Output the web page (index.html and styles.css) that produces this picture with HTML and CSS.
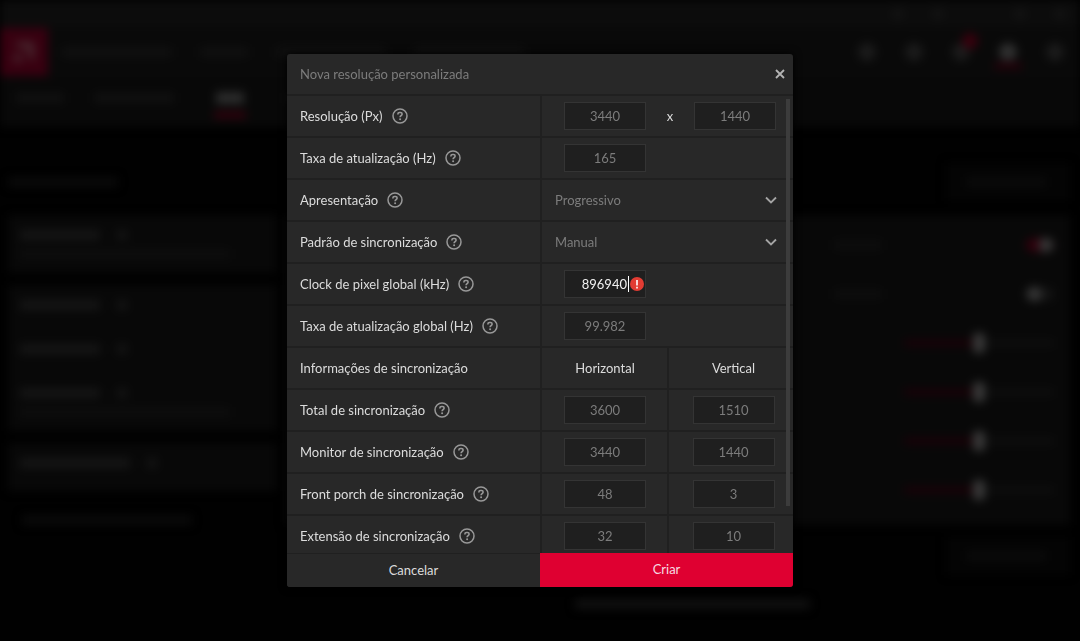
FILE: index.html
```html
<!DOCTYPE html>
<html lang="pt-BR">
<head>
  <meta charset="UTF-8" />
  <meta name="viewport" content="width=device-width, initial-scale=1.0" />
  <title>Nova resolução personalizada</title>
  <link rel="stylesheet" href="styles.css">
</head>
<body>
  <!-- Icons shared by the form rows -->
  <svg class="sprite" aria-hidden="true">
    <symbol id="help" viewBox="0 0 16 16">
      <circle cx="8" cy="8" r="7" fill="none" stroke="currentColor" stroke-width="1.5"/>
      <path d="M5.9 6.6V6c0-.9.7-1.5 1.6-1.5h1c1 0 1.6.6 1.6 1.5 0 1.6-2 1.6-2 3.3" fill="none" stroke="currentColor" stroke-width="1.6"/>
      <circle cx="8.1" cy="11.3" r="1" fill="currentColor"/>
    </symbol>
    <symbol id="chevron" viewBox="0 0 12 8">
      <path d="M1 1.5l5 5 5-5" fill="none" stroke="currentColor" stroke-width="1.8"/>
    </symbol>
  </svg>

  <!-- Dimmed application behind the dialog -->
  <div class="app" aria-hidden="true" inert>
    <div class="titlebar">
      <i class="dot"></i><i class="dot"></i><i class="dot far"></i><i class="dot"></i>
    </div>
    <div class="nav">
      <div class="logo">
        <svg viewBox="0 0 24 24"><path d="M2 2h20v20l-6-6V8H8zM7 11v6h6l-5 5H2v-6z"/></svg>
      </div>
      <i class="bar l"></i><i class="bar s"></i><i class="bar l"></i><i class="bar l"></i>
      <div class="nav-icons">
        <i class="ico"></i><i class="ico"></i><i class="ico badge"></i><i class="ico active"></i><i class="ico"></i>
      </div>
    </div>
    <div class="subnav">
      <i class="bar s"></i><i class="bar m"></i><i class="bar tab"></i><i class="bar m"></i>
    </div>
    <div class="heading"><i class="bar l"></i><div class="drop"><i class="bar m"></i></div></div>
    <div class="columns">
      <div class="left">
        <div class="card">
          <div class="line"><i class="bar m lit"></i><i class="dot"></i></div>
          <i class="bar xl"></i>
        </div>
        <div class="card tall">
          <div class="line"><i class="bar m lit"></i><i class="dot"></i></div>
          <div class="line"><i class="bar m lit"></i><i class="dot"></i></div>
          <div class="line"><i class="bar m lit"></i><i class="dot"></i></div>
          <i class="bar xl"></i>
        </div>
        <div class="card">
          <div class="line"><i class="bar l lit"></i><i class="dot"></i></div>
        </div>
        <i class="bar footnote"></i>
      </div>
      <div class="card right">
        <div class="control"><i class="bar s"></i><input type="checkbox" class="switch" checked></div>
        <div class="control"><i class="bar s"></i><input type="checkbox" class="switch"></div>
        <div class="control"><input type="range" class="slider"></div>
        <div class="control"><input type="range" class="slider"></div>
        <div class="control"><input type="range" class="slider"></div>
        <div class="control"><input type="range" class="slider"></div>
      </div>
    </div>
    <div class="heading end"><div class="drop"><i class="bar m"></i></div></div>
    <div class="status"><i class="bar"></i></div>
  </div>

  <div class="overlay">
    <form class="modal" role="dialog" aria-labelledby="dialog-title">
      <header class="modal-header">
        <h1 id="dialog-title">Nova resolução personalizada</h1>
        <button type="button" class="close" aria-label="Fechar">
          <svg viewBox="0 0 10 10"><path d="M1 1l8 8M9 1l-8 8" stroke="currentColor" stroke-width="1.8"/></svg>
        </button>
      </header>

      <div class="modal-body">
        <div class="rows">
          <div class="row">
            <div class="label"><label for="res-x">Resolução (Px)</label><svg class="help"><use href="#help"/></svg></div>
            <div class="value">
              <input type="text" class="field" id="res-x" value="3440" disabled>
              <span class="times">x</span>
              <input type="text" class="field" aria-label="Resolução vertical" value="1440" disabled>
            </div>
          </div>
          <div class="row">
            <div class="label"><label for="refresh">Taxa de atualização (Hz)</label><svg class="help"><use href="#help"/></svg></div>
            <div class="value"><input type="text" class="field" id="refresh" value="165" disabled></div>
          </div>
          <div class="row">
            <div class="label"><label for="display">Apresentação</label><svg class="help"><use href="#help"/></svg></div>
            <div class="value dropdown">
              <select id="display"><option>Progressivo</option></select>
              <svg class="chevron"><use href="#chevron"/></svg>
            </div>
          </div>
          <div class="row">
            <div class="label"><label for="standard">Padrão de sincronização</label><svg class="help"><use href="#help"/></svg></div>
            <div class="value dropdown">
              <select id="standard"><option>Manual</option></select>
              <svg class="chevron"><use href="#chevron"/></svg>
            </div>
          </div>
          <div class="row">
            <div class="label"><label for="clock">Clock de pixel global (kHz)</label><svg class="help"><use href="#help"/></svg></div>
            <div class="value">
              <div class="invalid">
                <input type="text" class="field" id="clock" value="896940" aria-invalid="true">
                <span class="caret"></span>
                <svg class="error" viewBox="0 0 14 14">
                  <circle cx="7" cy="7" r="7" fill="#e23c33"/>
                  <path d="M7 3v5.4M7 9.8v1.6" stroke="#fff" stroke-width="1.6"/>
                </svg>
              </div>
            </div>
          </div>
          <div class="row">
            <div class="label"><label for="global-refresh">Taxa de atualização global (Hz)</label><svg class="help"><use href="#help"/></svg></div>
            <div class="value"><input type="text" class="field" id="global-refresh" value="99.982" disabled></div>
          </div>
          <div class="row split">
            <div class="label">Informações de sincronização</div>
            <div class="value"><span class="col-title">Horizontal</span></div>
            <div class="value"><span class="col-title" id="col-v">Vertical</span></div>
          </div>
          <div class="row split">
            <div class="label"><label for="total">Total de sincronização</label><svg class="help"><use href="#help"/></svg></div>
            <div class="value"><input type="text" class="field" id="total" value="3600" disabled></div>
            <div class="value"><input type="text" class="field" aria-labelledby="col-v" value="1510" disabled></div>
          </div>
          <div class="row split">
            <div class="label"><label for="monitor">Monitor de sincronização</label><svg class="help"><use href="#help"/></svg></div>
            <div class="value"><input type="text" class="field" id="monitor" value="3440" disabled></div>
            <div class="value"><input type="text" class="field" aria-labelledby="col-v" value="1440" disabled></div>
          </div>
          <div class="row split">
            <div class="label"><label for="porch">Front porch de sincronização</label><svg class="help"><use href="#help"/></svg></div>
            <div class="value"><input type="text" class="field" id="porch" value="48" disabled></div>
            <div class="value"><input type="text" class="field" aria-labelledby="col-v" value="3" disabled></div>
          </div>
          <div class="row split">
            <div class="label"><label for="width">Extensão de sincronização</label><svg class="help"><use href="#help"/></svg></div>
            <div class="value"><input type="text" class="field" id="width" value="32" disabled></div>
            <div class="value"><input type="text" class="field" aria-labelledby="col-v" value="10" disabled></div>
          </div>
        </div>
        <div class="thumb"></div>
      </div>

      <footer class="modal-footer">
        <button type="button" class="cancel">Cancelar</button>
        <button type="submit" class="create">Criar</button>
      </footer>
    </form>
  </div>
</body>
</html>
```
FILE: styles.css
```css
* {
  box-sizing: border-box;
}
body {
  margin: 0;
  min-height: 100vh;
  background-color: #010101;
  color: #dcdcdc;
  font-family: Lato, "Liberation Sans", sans-serif;
  font-size: 13px;
  overflow: hidden;
}
button, input, select {
  font: inherit;
  color: inherit;
  margin: 0;
}
.sprite {
  display: none;
}

/* Background application */
.app {
  height: 100vh;
  overflow: hidden;
  filter: blur(5px);
}
.bar {
  display: block;
  height: 10px;
  background-color: #101010;
}
.bar.s { width: 48px; }
.bar.m { width: 80px; }
.bar.l { width: 110px; }
.bar.xl { width: 210px; }
.bar.lit { background-color: #151515; }
.dot {
  width: 12px;
  height: 12px;
  border-radius: 50%;
  background-color: #131313;
}
.titlebar {
  height: 27px;
  background-color: #0c0c0c;
  display: flex;
  align-items: center;
  justify-content: flex-end;
  gap: 28px;
  padding-right: 14px;
}
.titlebar .far {
  margin-left: 42px;
}
.nav {
  height: 50px;
  background-color: #090909;
  display: flex;
  align-items: center;
  gap: 28px;
}
.logo {
  width: 48px;
  height: 48px;
  margin-right: -14px;
  padding: 12px;
  background-color: #380010;
}
.logo svg {
  display: block;
  fill: #48282f;
}
.nav-icons {
  margin-left: auto;
  margin-right: 16px;
  display: flex;
  gap: 29px;
}
.ico {
  position: relative;
  width: 18px;
  height: 18px;
  border-radius: 50%;
  background-color: #1b1b1b;
}
.ico.active {
  background-color: #303030;
}
.ico.badge::after {
  content: "";
  position: absolute;
  top: -10px;
  right: -8px;
  width: 16px;
  height: 16px;
  border-radius: 50%;
  background-color: #38000d;
}
.ico.active::after {
  content: "";
  position: absolute;
  top: 20px;
  left: -5px;
  width: 28px;
  height: 6px;
  background-color: #28000a;
}
.subnav {
  height: 50px;
  background-color: #080808;
  display: flex;
  align-items: center;
  gap: 30px;
  padding: 0 0 8px 16px;
}
.bar.tab {
  position: relative;
  width: 28px;
  height: 12px;
  margin: 0 12px;
  background-color: #2c2c2c;
}
.bar.tab::after {
  content: "";
  position: absolute;
  top: 20px;
  left: -2px;
  width: 32px;
  height: 6px;
  background-color: #38000d;
}
.heading {
  display: flex;
  align-items: center;
  justify-content: space-between;
  padding: 36px 10px 14px 8px;
}
.heading .bar {
  background-color: #0a0a0a;
}
.drop {
  width: 124px;
  height: 38px;
  padding: 14px 20px;
  background-color: #040404;
}
.columns {
  display: grid;
  grid-template-columns: 268px 1fr;
  gap: 8px;
  padding: 0 10px 0 8px;
}
.left {
  display: flex;
  flex-direction: column;
  gap: 12px;
}
.card {
  background-color: #080808;
  padding: 14px 12px;
}
.card .bar.xl {
  background-color: #0d0d0d;
}
.line {
  display: flex;
  align-items: center;
  gap: 16px;
  margin-bottom: 8px;
}
.tall .line + .line {
  margin-top: 32px;
}
.left .footnote {
  width: 170px;
  margin: 12px 14px 0;
  background-color: #0a0a0a;
}
.right {
  padding: 5px 16px 5px 550px;
}
.control {
  height: 49px;
  display: flex;
  align-items: center;
  justify-content: space-between;
}
.control .bar {
  background-color: #0d0d0d;
}
.switch {
  appearance: none;
  width: 28px;
  height: 14px;
  border-radius: 7px;
  background: radial-gradient(circle at 8px 7px, #363636 7px, #131313 8px);
}
.switch:checked {
  background: radial-gradient(circle at 20px 7px, #363636 7px, #30000c 8px);
}
.slider {
  appearance: none;
  width: 150px;
  height: 6px;
  margin-left: auto;
  background: linear-gradient(to right, #1c0007 50%, #0f0f0f 50%);
}
.slider::-webkit-slider-thumb {
  appearance: none;
  width: 12px;
  height: 20px;
  border-radius: 4px;
  background-color: #383838;
}
.heading.end {
  justify-content: flex-end;
  padding: 12px 10px 24px;
}
.status {
  padding: 0 270px 0 575px;
}

/* Dialog */
.overlay {
  position: fixed;
  inset: 0;
  display: flex;
  align-items: center;
  justify-content: center;
}
.modal {
  width: calc(100% - 32px);
  max-width: 506px;
  background-color: #282828;
  border-radius: 3px;
  overflow: hidden;
  box-shadow: 0 0 8px #000;
}
.modal-header {
  display: flex;
  align-items: center;
  justify-content: space-between;
  height: 42px;
  padding: 0 8px 0 13px;
  border-bottom: 2px solid #202020;
}
.modal-header h1 {
  margin: 0;
  font-size: 13px;
  font-weight: normal;
  color: #7c7c7c;
}
.close {
  width: 10px;
  height: 10px;
  padding: 0;
  border: none;
  background: none;
  color: #b4b4b4;
  cursor: pointer;
}
.close svg {
  display: block;
}
.modal-body {
  position: relative;
}
.rows {
  max-height: calc(100vh - 184px);
  overflow-y: auto;
  scrollbar-width: none;
}
.row {
  display: grid;
  grid-template-columns: 1fr 1fr;
  height: 42px;
  border-bottom: 2px solid #202020;
}
.row.split {
  grid-template-columns: 2fr 1fr 1fr;
}
.label {
  display: flex;
  align-items: center;
  gap: 9px;
  padding-left: 13px;
}
.help {
  width: 16px;
  height: 16px;
  color: #989898;
}
.value {
  display: flex;
  align-items: center;
  padding-left: 22px;
  border-left: 2px solid #202020;
}
.value + .value {
  padding-left: 24px;
}
.field {
  width: 82px;
  height: 28px;
  padding: 0;
  border: 1px solid #343434;
  background-color: #1f1f1f;
  color: #7c7c7c;
  text-align: center;
  outline: none;
}
.times {
  width: 48px;
  text-align: center;
}
.col-title {
  width: 82px;
  text-align: center;
}
.dropdown {
  position: relative;
  padding-left: 0;
}
.dropdown select {
  appearance: none;
  width: 100%;
  height: 100%;
  padding: 0 32px 0 13px;
  border: none;
  background: none;
  color: #7c7c7c;
  outline: none;
}
.chevron {
  position: absolute;
  right: 16px;
  width: 12px;
  height: 8px;
  color: #a4a4a4;
  pointer-events: none;
}
.invalid {
  position: relative;
}
.invalid .field {
  padding-right: 18px;
  color: #f0f0f0;
  text-align: right;
}
.caret {
  position: absolute;
  top: 6px;
  right: 17px;
  width: 1px;
  height: 16px;
  background-color: #fff;
}
.error {
  position: absolute;
  top: 7px;
  right: 2px;
  width: 14px;
  height: 14px;
}
.thumb {
  position: absolute;
  top: 3px;
  right: 3px;
  width: 4px;
  height: 89%;
  background-color: #3c3c3c;
}
.modal-footer {
  display: grid;
  grid-template-columns: 1fr 1fr;
}
.modal-footer button {
  height: 34px;
  padding: 0 0 2px;
  border: none;
  cursor: pointer;
}
.modal-footer .cancel {
  background-color: #282828;
  border-top: 1px solid #202020;
}
.modal-footer .create {
  background-color: #df0031;
  color: #f6dbe1;
}
```
